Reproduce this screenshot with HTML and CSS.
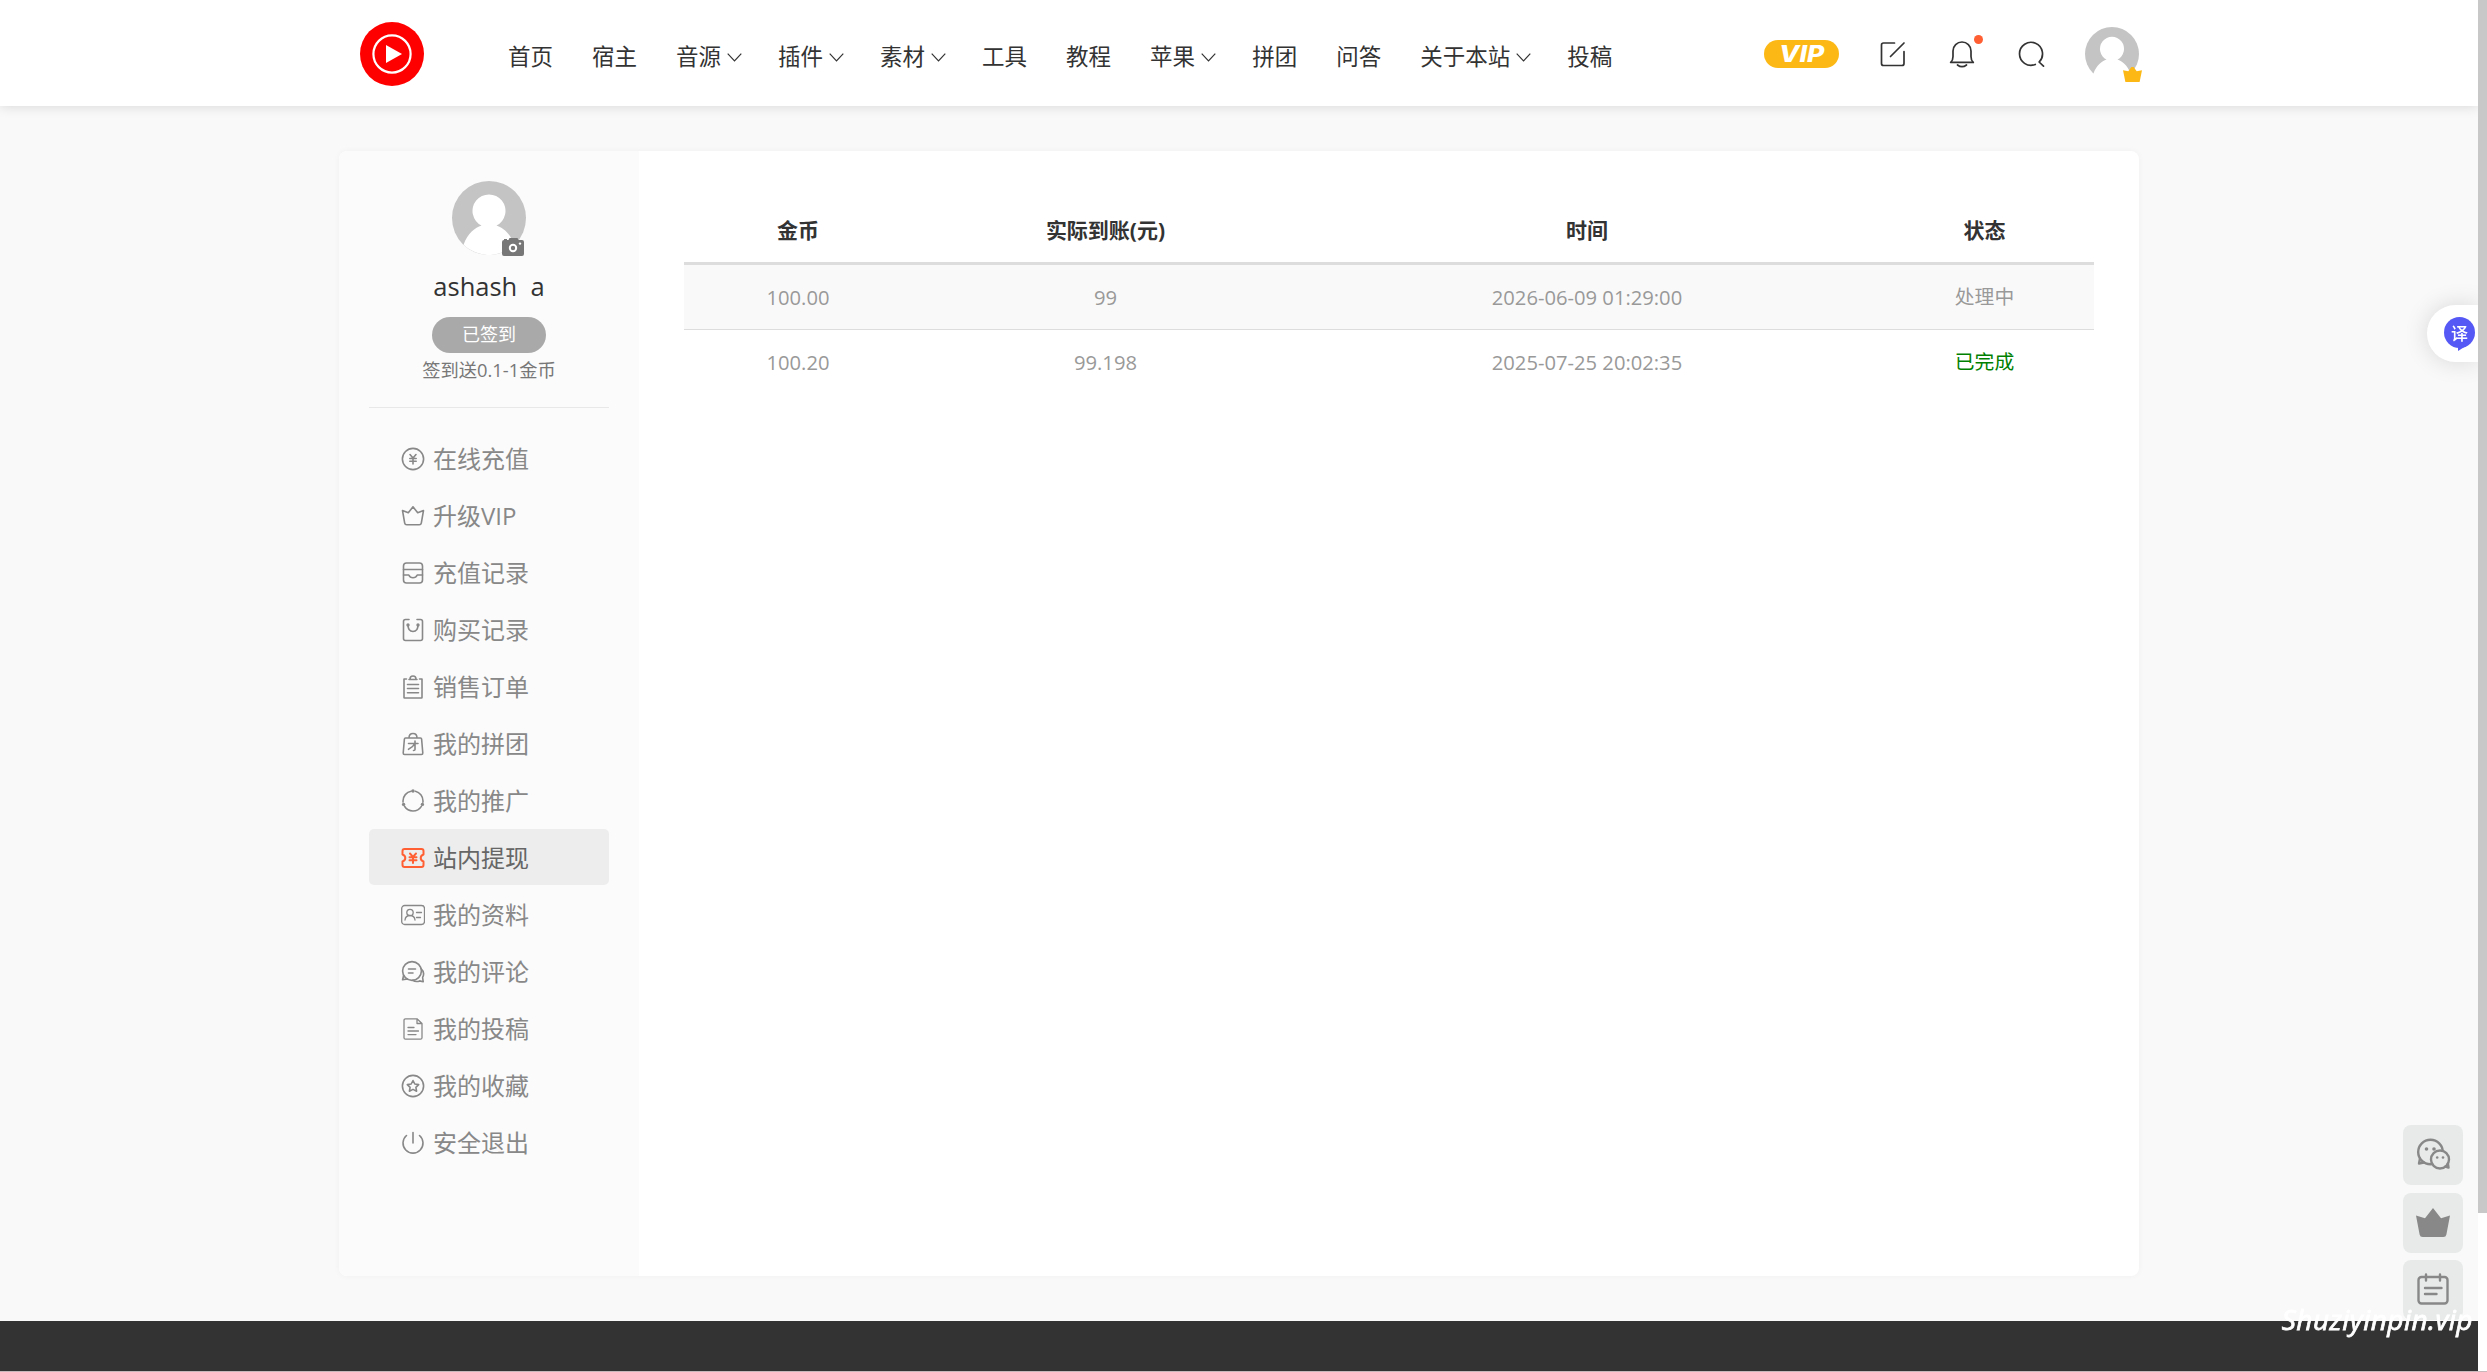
FILE: index.html
```
<!DOCTYPE html>
<html lang="zh-CN">
<head>
    <meta charset="UTF-8">
    <meta name="viewport" content="width=device-width, initial-scale=1.0">
    <title>站内提现</title>
    <link rel="stylesheet" href="styles.css">
</head>
<body>

<header class="header">
    <div class="container header-inner">
        <a class="logo" href="#">
            <svg viewBox="0 0 64 64"><circle cx="32" cy="32" r="32" fill="#f00"/><circle cx="32" cy="32" r="18.6" fill="none" stroke="#fff" stroke-width="2.2"/><path d="M26 23v18l16-9z" fill="#fff"/></svg>
        </a>
        <nav class="nav">
            <a href="#">首页</a>
            <a href="#">宿主</a>
            <a href="#">音源<svg class="arrow" viewBox="0 0 15 9"><path d="M.7.7l6.8 7.2L14.3.7"/></svg></a>
            <a href="#">插件<svg class="arrow" viewBox="0 0 15 9"><path d="M.7.7l6.8 7.2L14.3.7"/></svg></a>
            <a href="#">素材<svg class="arrow" viewBox="0 0 15 9"><path d="M.7.7l6.8 7.2L14.3.7"/></svg></a>
            <a href="#">工具</a>
            <a href="#">教程</a>
            <a href="#">苹果<svg class="arrow" viewBox="0 0 15 9"><path d="M.7.7l6.8 7.2L14.3.7"/></svg></a>
            <a href="#">拼团</a>
            <a href="#">问答</a>
            <a href="#">关于本站<svg class="arrow" viewBox="0 0 15 9"><path d="M.7.7l6.8 7.2L14.3.7"/></svg></a>
            <a href="#">投稿</a>
        </nav>
        <div class="tools">
            <a class="vip" href="#"><span>VIP</span></a>
            <a class="tool edit" href="#"><svg viewBox="0 0 28 28"><path d="M15.5 3h-11q-2 0-2 2v18.500q0 2 2 2H23q2 0 2-2v-12M25 3L11.500 16.500"/></svg></a>
            <a class="tool bell" href="#"><svg viewBox="0 0 28 28"><path d="M2.700 22.400h22.600q-2.300-2-2.300-6V11a9 9 0 0 0-18 0v5.400q0 4-2.300 6zM9.500 25q4.500 3.400 9 0"/></svg><i class="dot"></i></a>
            <a class="tool search" href="#"><svg viewBox="0 0 28 28"><path d="M18.300 24.500a11.500 11.500 0 1 1 3.800-2.500L26.500 26.200"/></svg></a>
            <a class="user" href="#">
                <svg class="avatar" viewBox="0 0 74 74"><circle cx="37" cy="37" r="37" fill="#c4c4c4"/><path d="M11.500 63.700C16 52 23 47 29.500 44.600a16.500 16.500 0 1 1 15 0C51 47 58 52 62.500 63.700L66 74H8z" fill="#fff"/></svg>
                <svg class="crown" viewBox="0 0 19 15"><path d="M0 3.200l5.300 1L8.400 0h2.200l3.100 4.200 5.300-1L16.600 15H2.400z" fill="#fcb916"/></svg>
            </a>
        </div>
    </div>
</header>

<main class="container panel">
    <aside class="sidebar">
        <div class="profile">
            <div class="photo">
                <svg class="avatar" viewBox="0 0 74 74"><circle cx="37" cy="37" r="37" fill="#c4c4c4"/><path d="M11.500 63.700C16 52 23 47 29.500 44.600a16.500 16.500 0 1 1 15 0C51 47 58 52 62.500 63.700A36.600 36.600 0 0 1 11.500 63.700z" fill="#fff"/></svg>
                <svg class="camera" viewBox="0 0 22 18"><path d="M2 2V1h3v1h1.500l1-2h8l1 2H20q2 0 2 2v12q0 2-2 2H2q-2 0-2-2V4q0-2 2-2z" fill="#777"/><circle cx="11" cy="10" r="3.200" fill="none" stroke="#fff" stroke-width="2"/><circle cx="18" cy="5.600" r="1.200" fill="#fff"/></svg>
            </div>
            <div class="name">ashash&nbsp;&nbsp;a</div>
            <div class="checkin">已签到</div>
            <div class="tip">签到送0.1-1金币</div>
        </div>
        <ul class="menu">
            <li><svg viewBox="0 0 24 24"><circle cx="12" cy="12" r="10.600"/><path d="M9 7.500l3 3.500 3-3.500M12 11v6M8.800 11.500h6.400M8.800 14.300h6.400"/></svg>在线充值</li>
            <li><svg viewBox="0 0 24 24"><path d="M1.500 6.500l5.800 2.300L12 2.800l4.700 6 5.800-2.300-2.200 12.700q-.3 1.600-2 1.600H5.700q-1.700 0-2-1.600z"/></svg>升级VIP</li>
            <li><svg viewBox="0 0 24 24"><rect x="2.500" y="2" width="19" height="20" rx="3"/><path d="M2.500 8.500h19M2.500 14h5.300q1.200 2.800 4.200 2.800t4.200-2.800h5.300"/></svg>充值记录</li>
            <li><svg viewBox="0 0 24 24"><path d="M8 1.500H4.500q-2 0-2 2v17q0 2 2 2h15q2 0 2-2v-17q0-2-2-2H16"/><path d="M7 7q0 6.500 5 6.500T17 7"/><circle cx="7" cy="7" r=".9"/><circle cx="17" cy="7" r=".9"/></svg>购买记录</li>
            <li><svg viewBox="0 0 24 24"><path d="M5.500 4H3v18.500q0 .5.500.5h17q.5 0 .5-.5V4h-2.500M8 4.500h8M9 4q0-3 3-3t3 3M6.500 9.500h11M6.500 13.500h11M6.500 17.800h11"/></svg>销售订单</li>
            <li><svg viewBox="0 0 24 24"><path d="M4.500 6h15q1 0 1.100 1l1.200 14q0 1.500-1.300 1.500h-17q-1.300 0-1.300-1.500L3.400 7q.1-1 1.100-1zM8 6q0-4.500 4-4.500T16 6M7.500 11.500h9.500M14 9v8.500q0 1-1.500 1M13.800 11.500q-2 4-6.300 5.800"/></svg>我的拼团</li>
            <li><svg viewBox="0 0 24 24"><circle cx="12" cy="12" r="10" stroke-dasharray="20 4.400 14.800 4.400 14.800 4.400" stroke-dashoffset="-5.700"/><g class="fill"><circle cx="12" cy="2" r="1.700"/><circle cx="2.600" cy="15.400" r="1.700"/><circle cx="21.400" cy="15.400" r="1.700"/></g></svg>我的推广</li>
            <li class="active"><svg viewBox="0 0 24 24"><path d="M3.500 3h17q2 0 2 2v3.500q-2.800 1-2.800 3.500t2.800 3.500V19q0 2-2 2h-17q-2 0-2-2v-3.500q2.800-1 2.800-3.500T1.500 8.500V5q0-2 2-2zM9 7.500l3 3.300 3-3.300M12 11v6M8.500 11.300h7M8.500 14.300h7"/></svg>站内提现</li>
            <li><svg viewBox="0 0 24 24"><g class="thin"><rect x=".7" y="2.500" width="22.800" height="19" rx="3"/><circle cx="9" cy="9.500" r="3.200"/><path d="M4 17q.5-4.500 5-4.500t5 4.500M15.500 9.500h5M15.500 14.500h4"/></g></svg>我的资料</li>
            <li><svg viewBox="0 0 24 24"><circle cx="11" cy="11" r="9.400"/><path d="M2.600 15.500l-1 4.300 5-.8M7.500 9h7M7.500 13h4.500M20 8.500a7.500 7.500 0 0 1 1.600 9l.6 4.200-3.600-.8q-3.500 1.500-7-.6"/></svg>我的评论</li>
            <li><svg viewBox="0 0 24 24"><g class="thin"><path d="M16 1.800H4.500q-1.500 0-1.500 1.500v17.400q0 1.500 1.500 1.500h15q1.500 0 1.500-1.500V6.500zM16 1.800v4.700h5M7 10.500h6M7 14h10.500M7 17.600h8"/></g></svg>我的投稿</li>
            <li><svg viewBox="0 0 24 24"><circle cx="12" cy="12" r="10.600"/><path d="M12 6.500l1.800 3.500 3.900.6-2.800 2.700.7 3.900-3.600-1.800-3.600 1.800.7-3.900-2.800-2.700 3.900-.6z"/></svg>我的收藏</li>
            <li><svg viewBox="0 0 24 24"><path d="M5.500 4.500a10 10 0 1 0 13 0M12 1.500v10.500"/></svg>安全退出</li>
        </ul>
    </aside>
    <section class="content">
        <table class="records">
            <colgroup>
                <col class="col-coin">
                <col class="col-money">
                <col class="col-time">
                <col class="col-status">
            </colgroup>
            <thead>
                <tr><th>金币</th><th>实际到账(元)</th><th>时间</th><th>状态</th></tr>
            </thead>
            <tbody>
                <tr><td>100.00</td><td>99</td><td>2026-06-09 01:29:00</td><td class="status">处理中</td></tr>
                <tr><td>100.20</td><td>99.198</td><td>2025-07-25 20:02:35</td><td class="status done">已完成</td></tr>
            </tbody>
        </table>
    </section>
</main>

<footer class="footer"></footer>

<div class="translate"><span>译</span></div>

<div class="rollbar">
    <a href="#"><svg viewBox="0 0 36 36"><circle cx="15.500" cy="15" r="12.300"/><path d="M5 21.500L4 26.500l5-1"/><circle class="face" cx="25" cy="22.500" r="9"/><path d="M30.500 29.500l3 1-.6-4"/><g class="fill"><circle cx="11.500" cy="12" r="1.800"/><circle cx="19" cy="12" r="1.800"/><circle cx="22.200" cy="20.500" r="1.300"/><circle cx="28" cy="20.500" r="1.300"/></g></svg></a>
    <a href="#"><svg viewBox="0 0 36 36"><path class="fill" d="M1 10.500l9 2.800 8-10.300 8 10.300 9-2.800-3.600 19q-.5 2.500-3 2.500H7.600q-2.500 0-3-2.500z"/></svg></a>
    <a href="#"><svg viewBox="0 0 36 36"><rect x="3.500" y="5" width="29" height="26.500" rx="3"/><path d="M11 2.500v6M25 2.500v6M10 16h16.500M10 22h11.500"/></svg></a>
</div>

<div class="watermark">Shuziyinpin.vip</div>
<div class="scrollbar"></div>
<div class="edge"></div>

</body>
</html>
```

FILE: styles.css
```
* {
    box-sizing: border-box;
}
body {
    margin: 0;
    padding-right: 9px;
    height: 1372px;
    overflow: hidden;
    background: #f9f9f9;
    color: #333;
    font-family: "Open Sans", "Noto Sans CJK SC", sans-serif;
    font-size: 21px;
}
a {
    color: inherit;
    text-decoration: none;
}
svg {
    display: block;
}
.container {
    width: 1800px;
    margin: 0 auto;
}

/* header */
.header {
    height: 106px;
    background: #fff;
    box-shadow: 0 0 12px rgba(0, 0, 0, 0.15);
}
.header-inner {
    display: flex;
    align-items: center;
    height: 107px;
}
.logo {
    width: 64px;
    height: 64px;
    margin-left: 21px;
}
.nav {
    display: flex;
    gap: 39px;
    margin-left: 84px;
    padding-top: 6px;
    font-size: 22.5px;
    line-height: 36px;
}
.nav a {
    display: flex;
    align-items: center;
}
.arrow {
    width: 15px;
    height: 9px;
    margin: 2px -3px 0 6px;
    fill: none;
    stroke: #333;
    stroke-width: 1.2;
}
.tools {
    display: flex;
    align-items: center;
    margin-left: auto;
}
.vip {
    display: flex;
    align-items: center;
    justify-content: center;
    width: 75px;
    height: 28px;
    border-radius: 14px;
    background: #fcb916;
    color: #fff;
    font: italic 800 23px/28px Inter, sans-serif;
}
.vip span {
    transform: scaleX(1.15);
}
.tool {
    position: relative;
    width: 28px;
    height: 28px;
    fill: none;
    stroke: #333;
    stroke-width: 1.7;
    stroke-linejoin: round;
    stroke-linecap: round;
}
.edit {
    margin-left: 40px;
}
.bell {
    margin-left: 41px;
}
.search {
    margin-left: 41px;
}
.dot {
    position: absolute;
    top: -5px;
    right: -7px;
    width: 9px;
    height: 9px;
    border-radius: 50%;
    background: #ff5f33;
}
.user {
    position: relative;
    width: 54px;
    height: 54px;
    margin-left: 40px;
}
.crown {
    position: absolute;
    right: -3px;
    bottom: -1px;
    width: 19px;
    height: 15px;
}

/* panel */
.panel {
    display: flex;
    height: 1125px;
    margin-top: 45px;
    border-radius: 8px;
    background: #fff;
    box-shadow: 0 0 6px rgba(0, 0, 0, 0.04);
    overflow: hidden;
}
.sidebar {
    width: 300px;
    padding: 30px;
    background: #fbfbfb;
}
.profile {
    display: flex;
    flex-direction: column;
    align-items: center;
    height: 227px;
    border-bottom: 1px solid #e8e8e8;
}
.photo {
    position: relative;
    width: 74px;
    height: 74px;
}
.camera {
    position: absolute;
    right: 2px;
    bottom: -1px;
    width: 22px;
    height: 18px;
}
.name {
    margin-top: 14px;
    font-size: 25.5px;
    line-height: 34px;
}
.checkin {
    width: 114px;
    height: 36px;
    margin-top: 14px;
    border-radius: 18px;
    background: #a9a9a9;
    color: #fff;
    font-size: 18px;
    line-height: 35px;
    text-align: center;
}
.tip {
    margin-top: 4px;
    color: #777;
    font-size: 18.3px;
    line-height: 26px;
}
.menu {
    display: flex;
    flex-direction: column;
    gap: 1px;
    margin: 22px 0 0;
    padding: 0;
    list-style: none;
}
.menu li {
    display: flex;
    align-items: center;
    gap: 8px;
    height: 56px;
    padding: 2px 0 0 32px;
    border-radius: 5px;
    color: #888;
    font-size: 24px;
    line-height: 54px;
}
.menu svg {
    width: 24px;
    height: 24px;
    fill: none;
    stroke: #888;
    stroke-width: 1.6;
    stroke-linejoin: round;
    stroke-linecap: round;
}
.menu .thin {
    stroke-width: 1.3;
}
.menu .fill {
    fill: #888;
    stroke: none;
}
.menu .active {
    background: #ededed;
    color: #666;
}
.menu .active svg {
    stroke: #ff5f33;
    stroke-width: 2;
}
.content {
    flex: 1;
    padding: 45px;
}

/* table */
.records {
    width: 1410px;
    table-layout: fixed;
    border-collapse: separate;
    border-spacing: 0;
    text-align: center;
}
.col-coin {
    width: 228px;
}
.col-money {
    width: 387px;
}
.col-time {
    width: 576px;
}
.col-status {
    width: 219px;
}
.records th {
    height: 69px;
    padding: 2px 0 0;
    border-bottom: 3px solid #ddd;
    font-size: 21px;
    line-height: 30px;
}
.records td {
    height: 65px;
    padding: 0;
    color: #999;
    font-size: 20.2px;
    line-height: 30px;
}
.records tbody tr:first-child td {
    border-bottom: 1px solid #ddd;
    background: #f9f9f9;
}
.records tbody tr:last-child td {
    height: 64px;
}
.records .status {
    font-size: 19.8px;
}
.records .done {
    color: green;
}

.footer {
    height: 51px;
    margin-top: 45px;
    margin-right: 0;
    background: #333;
}

/* floating things */
.translate {
    position: fixed;
    top: 305px;
    right: 9px;
    width: 51px;
    height: 57px;
    padding: 12px 0 0 17px;
    border-radius: 29px 0 0 29px;
    background: #fff;
    box-shadow: 0 0 24px rgba(0, 0, 0, 0.14);
}
.translate span {
    display: block;
    width: 31px;
    height: 31px;
    border-radius: 50%;
    background: #5558f5;
    color: #fff;
    font: 500 17px/31px "Noto Sans CJK SC", sans-serif;
    text-align: center;
}
.translate span::after {
    content: "";
    position: absolute;
    left: 31px;
    bottom: 11px;
    border: solid transparent;
    border-width: 5px 8px 0 0;
    border-top-color: #5558f5;
}
.rollbar {
    position: fixed;
    right: 24px;
    top: 1125px;
    display: flex;
    flex-direction: column;
    gap: 7.5px;
}
.rollbar a {
    display: flex;
    align-items: center;
    justify-content: center;
    width: 60px;
    height: 60px;
    border-radius: 8px;
    background: #e8eaea;
}
.rollbar svg {
    width: 36px;
    height: 36px;
    fill: none;
    stroke: #888;
    stroke-width: 2.4;
    stroke-linejoin: round;
    stroke-linecap: round;
}
.rollbar .face {
    fill: #e8eaea;
}
.rollbar .fill {
    fill: #888;
    stroke: none;
}
.watermark {
    position: fixed;
    right: 14px;
    top: 1301px;
    color: #fff;
    font: italic 28px/36px "Open Sans", sans-serif;
    letter-spacing: 0.45px;
    -webkit-text-stroke: 0.8px #fff;
}
.scrollbar {
    position: fixed;
    top: 0;
    right: 0;
    width: 9px;
    height: 1372px;
    background: linear-gradient(#c8c8c8 1213px, #fff 1213px);
}
.edge {
    position: fixed;
    left: 0;
    right: 0;
    top: 1371px;
    height: 1px;
    background: #c9b8bb;
}
```
